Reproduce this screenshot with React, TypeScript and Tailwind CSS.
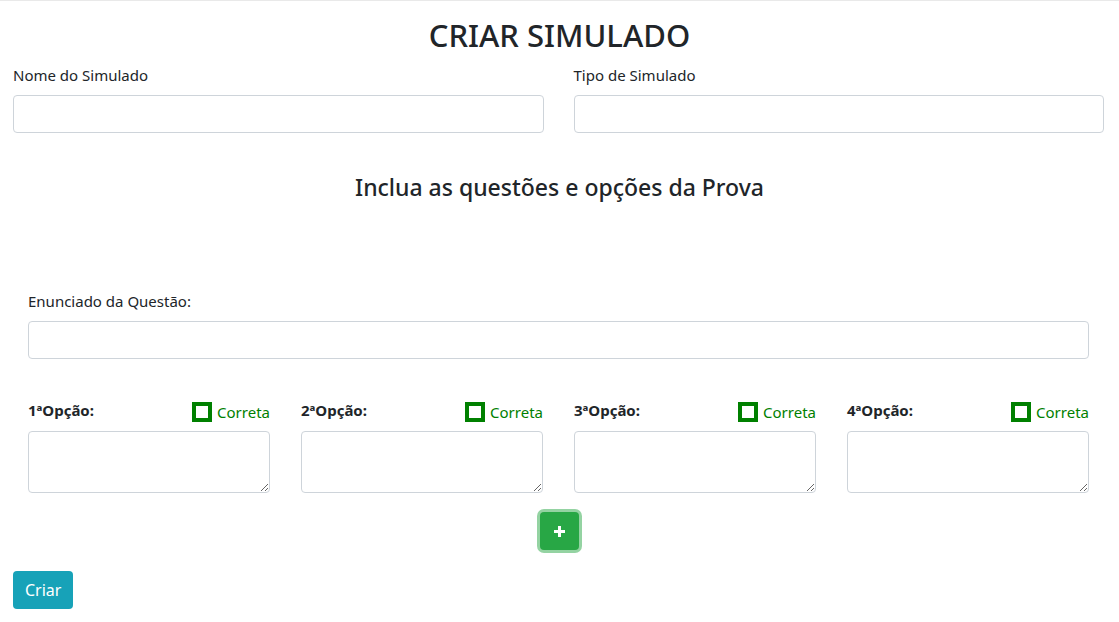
import React from "react";

const OPTIONS = ["1ªOpção:", "2ªOpção:", "3ªOpção:", "4ªOpção:"];

export default function App() {
  return (
    <div className="min-h-[622px] bg-white border-t border-[#e9e9e9] text-[#212529] font-['Noto_Sans',sans-serif]">
      <h1 className="text-center text-[31px] leading-[38px] font-medium pt-[15px]">CRIAR SIMULADO</h1>

      <div className="grid grid-cols-2 gap-x-[30px] pl-[13px] pr-[15px] mt-[9px]">
        <div>
          <label className="block text-[15px] leading-[24px] mb-[8px]">Nome do Simulado</label>
          <input className="block w-full h-[38px] border border-[#ced4da] rounded-[4px]" />
        </div>
        <div>
          <label className="block text-[15px] leading-[24px] mb-[8px]">Tipo de Simulado</label>
          <input className="block w-full h-[38px] border border-[#ced4da] rounded-[4px]" />
        </div>
      </div>

      <h4 className="text-center text-[23px] leading-[29px] font-medium mt-[40px]">
        Inclua as questões e opções da Prova
      </h4>

      <div className="pl-[28px] pr-[30px] mt-[87px]">
        <label className="block text-[15px] leading-[24px] mb-[8px]">Enunciado da Questão:</label>
        <input className="block w-full h-[38px] border border-[#ced4da] rounded-[4px]" />

        <div className="grid grid-cols-4 gap-x-[31px] mt-[40px]">
          {OPTIONS.map((o) => (
            <div key={o}>
              <div className="flex items-start justify-between h-[30px] mb-[2px]">
                <span className="text-[15px] leading-[22px] font-bold">{o}</span>
                <label className="flex items-center gap-[5px] pt-[3px]">
                  <span className="w-[20px] h-[20px] border-[4px] border-[#008000] bg-white" />
                  <span className="text-[15px] leading-[20px] text-[#008000]">Correta</span>
                </label>
              </div>
              <textarea className="block w-full h-[62px] border border-[#ced4da] rounded-[4px]" />
            </div>
          ))}
        </div>
      </div>

      <div className="flex justify-center mt-[19px]">
        <button className="w-[39px] h-[38px] bg-[#28a745] rounded-[4px] ring-[3px] ring-[#94d3a2] flex items-center justify-center">
          <svg width="11" height="11" viewBox="0 0 11 11">
            <path d="M4 0h3v4h4v3H7v4H4V7H0V4h4z" fill="#fff" />
          </svg>
        </button>
      </div>

      <div className="pl-[13px] mt-[21px]">
        <button className="h-[38px] px-[12px] bg-[#17a2b8] text-white text-[16px] rounded-[4px]">Criar</button>
      </div>
    </div>
  );
}
